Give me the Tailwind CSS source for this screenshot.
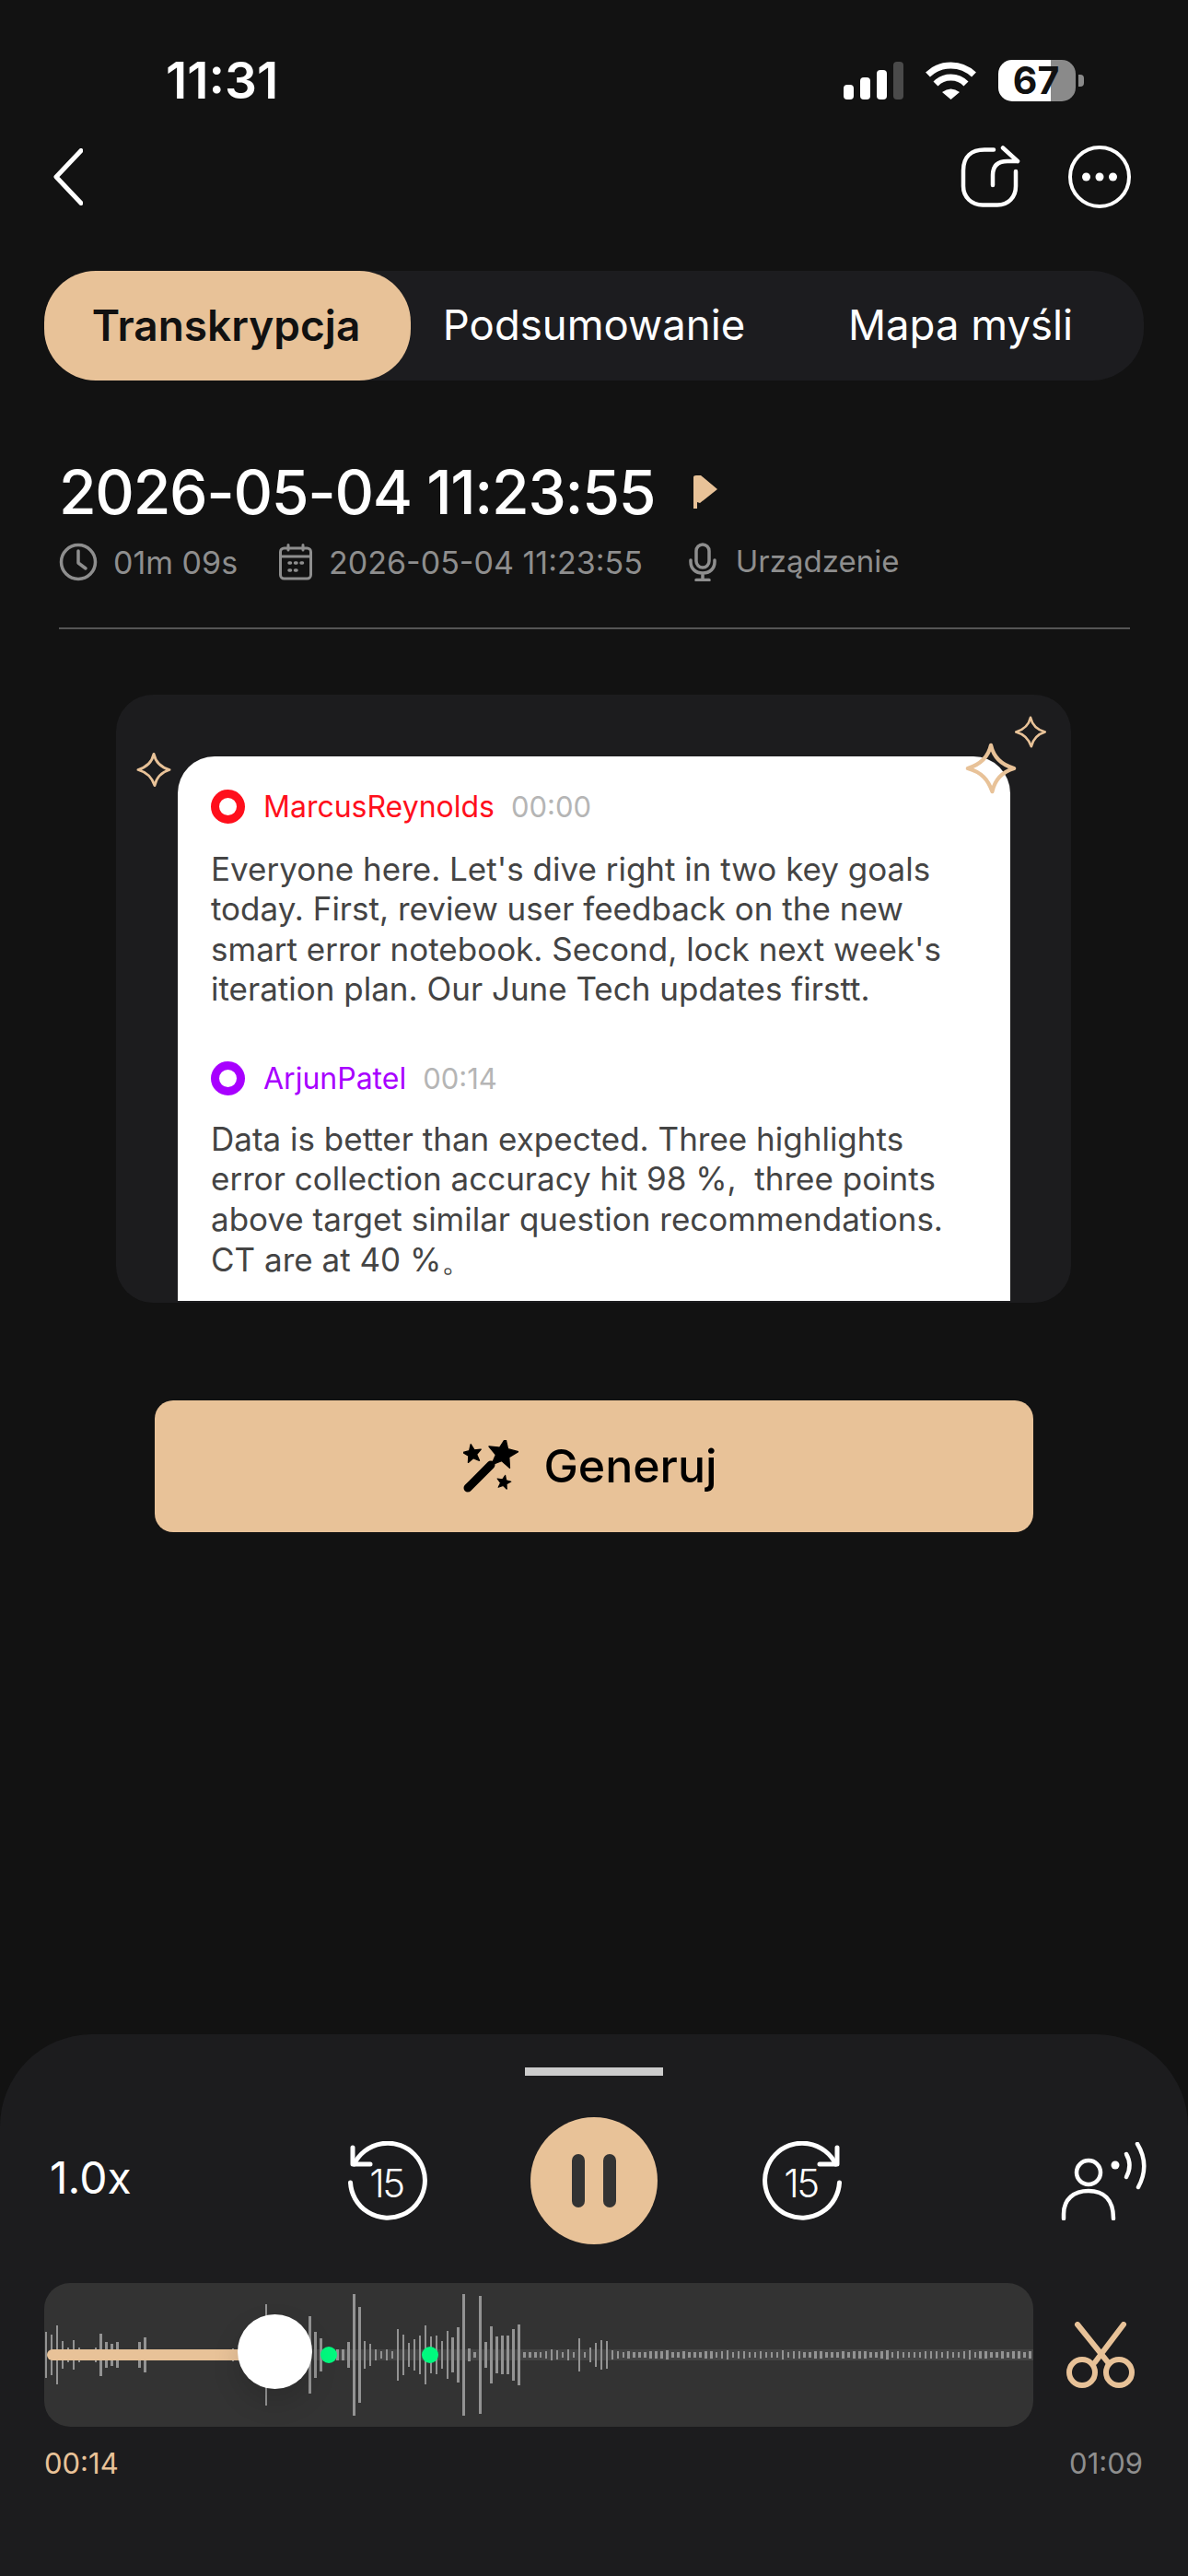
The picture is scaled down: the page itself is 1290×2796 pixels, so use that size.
<!DOCTYPE html>
<html lang="pl">
<head>
  <meta charset="UTF-8">
  <meta name="viewport" content="width=device-width, initial-scale=1.0">
  <title>Transkrypcja</title>
  <script src="https://cdn.jsdelivr.net/npm/@tailwindcss/browser@4"></script>
</head>
<body class="m-0 bg-[#121212] [font-family:Inter,sans-serif]">
<div class="w-[1290px] h-[2796px] overflow-hidden flex flex-col bg-[#121212] text-white">

  <!-- status bar -->
  <div class="mt-[62px] h-[50px] flex items-center pl-[180px]">
    <span class="text-[55px] leading-[50px] font-semibold">11:31</span>
    <div class="ml-auto flex items-end gap-[7px] h-[41px] mb-[-1px]">
      <div class="w-[11px] h-[16px] rounded-[4px] bg-white"></div>
      <div class="w-[11px] h-[24px] rounded-[4px] bg-white"></div>
      <div class="w-[11px] h-[32px] rounded-[4px] bg-white"></div>
      <div class="w-[11px] h-[41px] rounded-[4px] bg-[#4a4a4a]"></div>
    </div>
    <svg class="ml-[23px]" width="57" height="42" viewBox="0 0 57 42" fill="none" stroke="#fff" stroke-width="7">
      <path d="M3.5 15 A36 36 0 0 1 53.5 15"/>
      <path d="M12 25 A23 23 0 0 1 45 25"/>
      <path d="M19 34 Q28.5 27 38 34 L28.5 42Z" fill="#fff" stroke="none"/>
    </svg>
    <div class="ml-[23px] relative w-[84px] h-[45px] flex">
      <div class="w-[57px] rounded-l-[15px] bg-white"></div>
      <div class="w-[27px] rounded-r-[15px] bg-[#8a8a8a]"></div>
      <span class="absolute inset-0 flex items-center justify-center text-[41px] leading-[45px] font-bold text-[#111] translate-x-[-1px]">67</span>
    </div>
    <div class="ml-[3px] mr-[113px] w-[6px] h-[13px] rounded-r-[4px] bg-[#8a8a8a]"></div>
  </div>

  <!-- nav -->
  <div class="mt-[46px] h-[68px] flex items-center pl-[58px]">
    <svg width="32" height="62" viewBox="0 0 32 62" fill="none" stroke="#fff" stroke-width="5" stroke-linecap="round" stroke-linejoin="round">
      <path d="M30 2.5 L3 31 L30 59.5"/>
    </svg>
    <svg class="ml-auto" width="66" height="68" viewBox="0 0 66 68" fill="none" stroke="#fff" stroke-width="4.5" stroke-linecap="round" stroke-linejoin="round">
      <path d="M36 4.5 H26 C12 4.5 3 12 3 27 V44 C3 56 12 64.5 24 64.5 H40 C52 64.5 60 56 60 44 V28"/>
      <path d="M35 43 V32 Q35 17 51 17 H62 M46 2.5 L62 17"/>
    </svg>
    <svg class="ml-[51px] mr-[62px]" width="68" height="68" viewBox="0 0 68 68" fill="none">
      <circle cx="34" cy="34" r="32" stroke="#fff" stroke-width="4"/>
      <circle cx="19.5" cy="34" r="4.5" fill="#fff"/>
      <circle cx="34" cy="34" r="4.5" fill="#fff"/>
      <circle cx="48.5" cy="34" r="4.5" fill="#fff"/>
    </svg>
  </div>

  <!-- tabs -->
  <div class="mt-[68px] mx-[48px] h-[119px] rounded-[56px] bg-[#1c1c1f] flex items-center text-[45.5px]">
    <div class="w-[398px] h-full rounded-[56px] bg-[#e8c298] flex items-center justify-center pr-[3px] text-[46px] font-semibold text-[#111]">Transkrypcja</div>
    <div class="w-[398px] text-center">Podsumowanie</div>
    <div class="w-[398px] text-center">Mapa myśli</div>
  </div>

  <!-- title -->
  <div class="mt-[81px] ml-[64px] h-[80px] flex items-center">
    <h1 class="text-[66px] leading-[80px] font-medium tracking-[-1.3px]">2026-05-04 11:23:55</h1>
    <svg class="ml-[42px]" width="27" height="36" viewBox="0 0 27 36" fill="#e8c298"><path d="M0 2 Q0 0 3 0 H8 L26 15 L7 30 L4 29 V36 H0 Z"/></svg>
  </div>
  <div class="mt-[14px] ml-[64px] h-[44px] flex items-center text-[34px] text-[#8e8e8e]">
    <svg width="42" height="42" viewBox="0 0 42 42" fill="none" stroke="#8e8e8e" stroke-width="3.5" stroke-linecap="round" stroke-linejoin="round">
      <circle cx="21" cy="21" r="18.5"/><path d="M21 9 V22 L29 28"/>
    </svg>
    <span class="ml-[17px]">01m 09s</span>
    <svg class="ml-[45px]" width="36" height="40" viewBox="0 0 36 40" fill="none" stroke="#8e8e8e" stroke-width="3" stroke-linecap="round">
      <rect x="1.5" y="5" width="33" height="33" rx="4"/>
      <path d="M2 14 H34 M10 1.5 V7 M26 1.5 V7"/>
      <path d="M11 21 h1.5 M17.5 21 h1.5 M24 21 h1.5 M11 29 h1.5 M17.5 29 h1.5" stroke-width="3.5"/>
    </svg>
    <span class="ml-[18px]">2026-05-04 11:23:55</span>
    <svg class="ml-[50px]" width="30" height="42" viewBox="0 0 30 42" fill="none" stroke="#8e8e8e" stroke-width="3.5" stroke-linecap="round">
      <rect x="8" y="2" width="14" height="25" rx="7"/>
      <path d="M2 19 V21 C2 28 7 33 15 33 C23 33 28 28 28 21 V19 M15 33 V40 M8 40.5 H22"/>
    </svg>
    <span class="ml-[21px] text-[33px]">Urządzenie</span>
  </div>
  <div class="mt-[49px] mx-[64px] w-[1163px] h-[1.5px] bg-[#555]"></div>

  <!-- preview card -->
  <div class="mt-[71px] ml-[126px] relative w-[1037px] h-[660px] rounded-[40px] bg-[#1c1c1e]">
    <div class="ml-[67px] absolute top-[67px] w-[904px] h-[591px] rounded-t-[40px] bg-white overflow-hidden pl-[36px] pt-[32px] text-[35px] leading-[43.6px] text-[#444]">
      <div class="flex items-center h-[46px]">
        <div class="w-[37px] h-[37px] rounded-full border-[9px] border-[#ff0f1c]"></div>
        <span class="ml-[20px] text-[32px] text-[#ff0f1c]">MarcusReynolds</span>
        <span class="ml-[18px] text-[31px] text-[#b5b5b5]">00:00</span>
      </div>
      <p class="mt-[23px] w-[830px]">Everyone here. Let's dive right in two key goals<br>today. First, review user feedback on the new<br>smart error notebook. Second, lock next week's<br>iteration plan. Our June Tech updates firstt.</p>
      <div class="mt-[52px] flex items-center h-[46px]">
        <div class="w-[37px] h-[37px] rounded-full border-[9px] border-[#a800ff]"></div>
        <span class="ml-[20px] text-[32px] text-[#a800ff]">ArjunPatel</span>
        <span class="ml-[18px] text-[31px] text-[#b5b5b5]">00:14</span>
      </div>
      <p class="mt-[21px] w-[830px]">Data is better than expected. Three highlights<br>error collection accuracy hit 98 %,&nbsp; three points<br>above target similar question recommendations.<br>CT are at 40 %。</p>
    </div>
    <svg class="absolute left-[22px] top-[62px]" width="38" height="39" viewBox="0 0 40 40" fill="none" stroke="#e8c298" stroke-width="3" stroke-linejoin="round"><path d="M20 2 C22 11 27 17 38 20 C28 23 23 29 21 38 C18 29 13 23 2 20 C12 17 18 11 20 2Z"/></svg>
    <svg class="absolute left-[975px] top-[23px]" width="36" height="35" viewBox="0 0 40 40" fill="none" stroke="#e8c298" stroke-width="3" stroke-linejoin="round"><path d="M20 2 C22 11 27 17 38 20 C28 23 23 29 21 38 C18 29 13 23 2 20 C12 17 18 11 20 2Z"/></svg>
    <svg class="absolute left-[921px] top-[52px]" width="58" height="56" viewBox="0 0 40 40" fill="none" stroke="#e8c298" stroke-width="3" stroke-linejoin="round"><path d="M20 2 C22 11 27 17 38 20 C28 23 23 29 21 38 C18 29 13 23 2 20 C12 17 18 11 20 2Z"/></svg>
  </div>

  <!-- generate -->
  <button class="mt-[106px] ml-[168px] w-[954px] h-[143px] rounded-[20px] bg-[#e8c298] flex items-center justify-center gap-[27px] pr-[8px] text-[50px] font-medium text-black">
    <svg width="60" height="57" viewBox="0 0 60 57" fill="#000" stroke="#000" stroke-linejoin="round">
      <path d="M5 52 L30 27" stroke-width="9" stroke-linecap="round"/>
      <path transform="translate(43 15) rotate(10) scale(1.7)" stroke-width="0.8" d="M0 -10 L2.65 -3.64 L9.51 -3.09 L4.28 1.39 L5.88 8.09 L0 4.5 L-5.88 8.09 L-4.28 1.39 L-9.51 -3.09 L-2.65 -3.64Z"/>
      <path transform="translate(10 15) rotate(-10) scale(1.05)" stroke-width="1.2" d="M0 -10 L2.65 -3.64 L9.51 -3.09 L4.28 1.39 L5.88 8.09 L0 4.5 L-5.88 8.09 L-4.28 1.39 L-9.51 -3.09 L-2.65 -3.64Z"/>
      <path transform="translate(44 46) rotate(12) scale(.8)" stroke-width="1.2" d="M0 -10 L2.65 -3.64 L9.51 -3.09 L4.28 1.39 L5.88 8.09 L0 4.5 L-5.88 8.09 L-4.28 1.39 L-9.51 -3.09 L-2.65 -3.64Z"/>
    </svg>
    <span>Generuj</span>
  </button>

  <!-- player sheet -->
  <div class="mt-auto h-[588px] rounded-t-[100px] bg-[#1c1c1e] flex flex-col">
    <div class="mt-[36px] mx-auto w-[150px] h-[9px] bg-[#cccccc]"></div>

    <div class="mt-[45px] h-[138px] flex items-center pl-[54px]">
      <span class="w-[87px] text-[48px] leading-none mt-[-6px]">1.0x</span>

      <div class="ml-[237px] relative w-[86px] h-[86px] flex items-center justify-center">
        <svg class="absolute inset-0" width="86" height="86" viewBox="0 0 86 86" fill="none" stroke="#fff" stroke-width="5" stroke-linecap="round" stroke-linejoin="round">
          <path d="M2.5 45 A40.5 40.5 0 1 0 6.5 25"/>
          <path d="M5 7 V25 H24"/>
        </svg>
        <span class="text-[42px] font-light tracking-[-2.5px] pt-[4px] pr-[3px]">15</span>
      </div>

      <div class="ml-[112px] w-[138px] h-[138px] rounded-full bg-[#e8c298] flex items-center justify-center gap-[20px]">
        <div class="w-[14px] h-[58px] rounded-full bg-[#333]"></div>
        <div class="w-[14px] h-[58px] rounded-full bg-[#333]"></div>
      </div>

      <div class="ml-[114px] relative w-[86px] h-[86px] flex items-center justify-center">
        <svg class="absolute inset-0 -scale-x-100" width="86" height="86" viewBox="0 0 86 86" fill="none" stroke="#fff" stroke-width="5" stroke-linecap="round" stroke-linejoin="round">
          <path d="M2.5 45 A40.5 40.5 0 1 0 6.5 25"/>
          <path d="M5 7 V25 H24"/>
        </svg>
        <span class="text-[42px] font-light tracking-[-2.5px] pt-[4px] pr-[3px]">15</span>
      </div>

      <svg class="ml-[238px]" width="96" height="85" viewBox="0 0 96 85" fill="none" stroke="#fff" stroke-width="4.5" stroke-linecap="round">
        <circle cx="30" cy="33" r="13"/>
        <path d="M3 83 V78 C3 62 14 53 30 53 C46 53 57 62 57 83"/>
        <circle cx="59" cy="25" r="4.5" fill="#fff" stroke="none"/>
        <path d="M71 13 Q78 25 71 38"/>
        <path d="M83 2 Q97 25 84 49"/>
      </svg>
    </div>

    <div class="mt-[42px] flex items-center pl-[48px]">
      <div class="relative w-[1074px] h-[156px] rounded-[28px] bg-[#333333] overflow-hidden">
        <div class="absolute left-[292px] right-0 top-[72px] h-[12px] bg-[#444444]"></div>
        <div id="wave" class="absolute inset-0 flex items-center gap-[3.47px] pl-[0.8px]"></div>
        <div class="absolute left-[3px] top-[72px] w-[215px] h-[12px] rounded-full bg-[#e8c298]"></div>
        <div class="absolute left-[300px] top-[69px] w-[18px] h-[18px] rounded-full bg-[#00f97e]"></div>
        <div class="absolute left-[410px] top-[69px] w-[18px] h-[18px] rounded-full bg-[#00f97e]"></div>
        <div class="absolute left-[210px] top-[34px] w-[81px] h-[81px] rounded-full bg-white shadow-[0_14px_30px_rgba(0,0,0,0.14)]"></div>
      </div>
      <svg class="ml-[36px]" width="74" height="72" viewBox="0 0 74 72" fill="none" stroke="#e8c298" stroke-width="6" stroke-linecap="round">
        <path d="M12 3 L45 44 M62 3 L31 44"/>
        <circle cx="17" cy="55" r="14"/>
        <circle cx="57" cy="55" r="14"/>
      </svg>
    </div>

    <div class="mt-[22px] pl-[48px] pr-[49px] flex justify-between text-[31px] leading-[36px]">
      <span class="text-[#e8c298]">00:14</span>
      <span class="text-[#8e8e8e]">01:09</span>
    </div>
  </div>
</div>

<script>
  const peaks = [25,22,32,15,8,16,8,0,0,8,23,14,12,14,6,0,0,14,19,0,0,0,0,0,0,0,0,0,0,0,0,6,0,0,7,0,0,0,0,0,55,0,0,0,0,0,0,0,42,25,18,0,0,6,6,14,66,52,15,12,6,4,6,4,28,22,13,17,21,32,20,21,15,26,19,30,66,7,3,64,14,31,20,21,21,28,33,3,3,3,3,4,6,5,3,6,3,18,3,8,13,16,15,5,4,3,4,3,3,3,4,4,4,5,3,3,4,3,3,3,4,4,3,4,5,3,4,4,3,3,4,3,3,3,5,3,4,4,3,3,4,4,3,3,3,4,3,4,4,4,3,3,4,5,3,4,3,3,3,3,4,4,4,3,4,3,3,4,5,3,4,4,3,3,4,3,4,4,3,4]
  const wave = document.querySelector('#wave')
  peaks.forEach(peak => {
    const bar = document.createElement('div')
    bar.className = 'w-[2.5px] shrink-0 bg-[#939393]'
    bar.style.height = `${peak * 2}px`
    wave.appendChild(bar)
  })
</script>
</body>
</html>
